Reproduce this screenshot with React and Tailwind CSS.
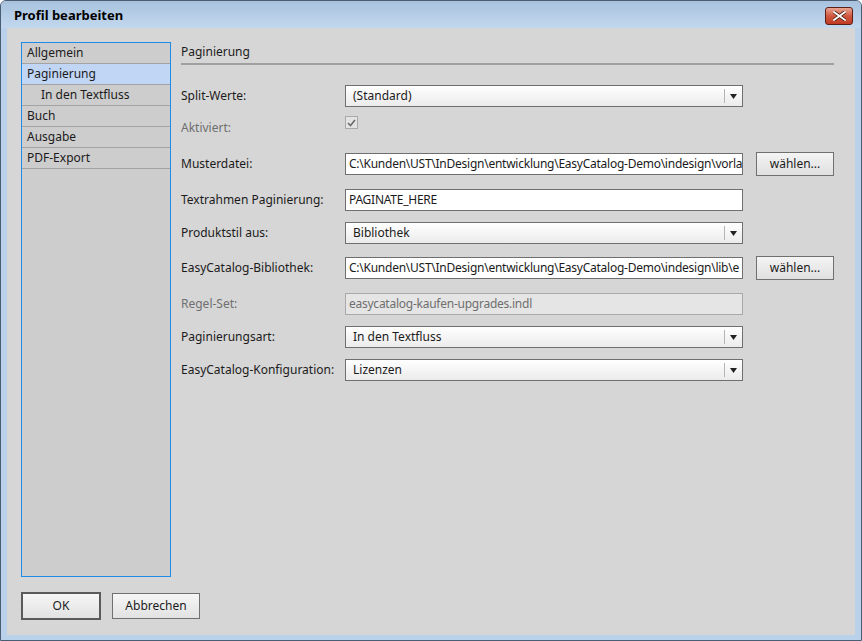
import React from "react";

const navItems = [
  { label: "Allgemein" },
  { label: "Paginierung", active: true },
  { label: "In den Textfluss", indent: true },
  { label: "Buch" },
  { label: "Ausgabe" },
  { label: "PDF-Export" },
];

function Select({ value }) {
  return (
    <div className="w-[398px] h-[22px] border border-[#6f6f6f] bg-gradient-to-b from-white to-[#ebebeb] flex items-center">
      <span className="flex-1 pl-[7px] truncate">{value}</span>
      <div className="w-px h-[14px] bg-[#b5b5b5]" />
      <div className="w-[17px] flex justify-center">
        <svg width="7" height="5" viewBox="0 0 7 5">
          <path d="M0 0 H7 L3.5 5 Z" fill="#222" />
        </svg>
      </div>
    </div>
  );
}

function TextInput({ value, disabled }) {
  return (
    <div
      className={`w-[398px] h-[22px] border flex items-center overflow-hidden whitespace-nowrap ${
        disabled
          ? "bg-[#e5e5e5] border-[#a9a9a9] text-[#6f6f6f]"
          : "bg-white border-[#6f6f6f]"
      }`}
    >
      <span className="pl-[3px] tracking-[-0.25px]">{value}</span>
    </div>
  );
}

function Row({ label, disabled, className = "", children, button }) {
  return (
    <div className={`h-[24px] flex items-center ${className}`}>
      <div className={`w-[164px] ${disabled ? "text-[#6f6f6f]" : ""}`}>{label}</div>
      {children}
      {button && (
        <button className="ml-[13px] w-[78px] h-[24px] border border-[#707070] bg-gradient-to-b from-[#f4f4f4] to-[#e0e0e0]">
          wählen...
        </button>
      )}
    </div>
  );
}

export default function App() {
  return (
    <div
      className="w-[862px] h-[641px] bg-[#b9d1ea] border border-[#4a5d73] rounded-t-[6px] flex flex-col text-[12px] text-[#1b1b1b] overflow-hidden"
      style={{ fontFamily: '"Noto Sans", "Open Sans", sans-serif' }}
    >
      {/* title bar */}
      <div className="h-[27px] flex items-center justify-between bg-gradient-to-b from-[#a8c2de] to-[#c2d8ee] px-[13px] pr-[8px]">
        <span className="text-[13px] font-bold text-black pt-[2px]">Profil bearbeiten</span>
        <div className="w-[28px] h-[18px] mt-[2px] rounded-[3px] border border-[#5c1f17] bg-gradient-to-b from-[#e8a493] via-[#d0573f] to-[#c23a23] flex items-center justify-center">
          <svg width="13" height="10" viewBox="0 0 13 10">
            <path
              d="M1 1 L12 9 M12 1 L1 9"
              stroke="#3a1810"
              strokeWidth="3.4"
              strokeLinecap="square"
            />
            <path
              d="M1 1 L12 9 M12 1 L1 9"
              stroke="#ffffff"
              strokeWidth="1.8"
              strokeLinecap="square"
            />
          </svg>
        </div>
      </div>

      {/* client area */}
      <div className="mx-[6px] mb-[5px] flex-1 bg-[#d6d6d6] pl-[14px] pr-[21px] pt-[14px] flex flex-col">
        <div className="flex">
          {/* sidebar */}
          <div className="w-[150px] h-[535px] border border-[#1e8ce6] bg-[#cdcdcd]">
            {navItems.map((item) => (
              <div
                key={item.label}
                className={`h-[21px] border-b border-[#a3a3a3] flex items-center ${
                  item.indent ? "pl-[19px]" : "pl-[5px]"
                } ${item.active ? "bg-[#c1d5f5]" : ""}`}
              >
                {item.label}
              </div>
            ))}
          </div>

          {/* right pane */}
          <div className="ml-[10px] flex-1">
            <div className="h-[21px] flex items-end pb-[2px]">Paginierung</div>
            <div className="h-[2px] bg-[#a0a0a0]" />

            <Row label="Split-Werte:" className="mt-[19px]">
              <Select value="(Standard)" />
            </Row>

            <Row label="Aktiviert:" disabled className="mt-[8px]">
              <div className="self-start w-[13px] h-[13px] border border-[#a9a9a9] bg-[#e3e3e3] flex items-center justify-center">
                <svg width="9" height="8" viewBox="0 0 9 8">
                  <path d="M1 4 L3.5 6.5 L8 1" stroke="#6a6a6a" strokeWidth="1.6" fill="none" />
                </svg>
              </div>
            </Row>

            <Row label="Musterdatei:" button className="mt-[12px]">
              <TextInput value="C:\Kunden\UST\InDesign\entwicklung\EasyCatalog-Demo\indesign\vorla" />
            </Row>

            <Row label="Textrahmen Paginierung:" className="mt-[12px]">
              <TextInput value="PAGINATE_HERE" />
            </Row>

            <Row label="Produktstil aus:" className="mt-[9px]">
              <Select value="Bibliothek" />
            </Row>

            <Row label="EasyCatalog-Bibliothek:" button className="mt-[11px]">
              <TextInput value="C:\Kunden\UST\InDesign\entwicklung\EasyCatalog-Demo\indesign\lib\e" />
            </Row>

            <Row label="Regel-Set:" disabled className="mt-[12px]">
              <TextInput value="easycatalog-kaufen-upgrades.indl" disabled />
            </Row>

            <Row label="Paginierungsart:" className="mt-[9px]">
              <Select value="In den Textfluss" />
            </Row>

            <Row label="EasyCatalog-Konfiguration:" className="mt-[9px]">
              <Select value="Lizenzen" />
            </Row>
          </div>
        </div>

        {/* footer buttons */}
        <div className="mt-[15px] flex items-center">
          <button className="w-[80px] h-[28px] border-2 border-[#5a5a5a] bg-gradient-to-b from-[#f6f6f6] to-[#e2e2e2]">
            OK
          </button>
          <button className="ml-[11px] w-[88px] h-[26px] border border-[#707070] bg-gradient-to-b from-[#f6f6f6] to-[#e2e2e2]">
            Abbrechen
          </button>
        </div>
      </div>
    </div>
  );
}
